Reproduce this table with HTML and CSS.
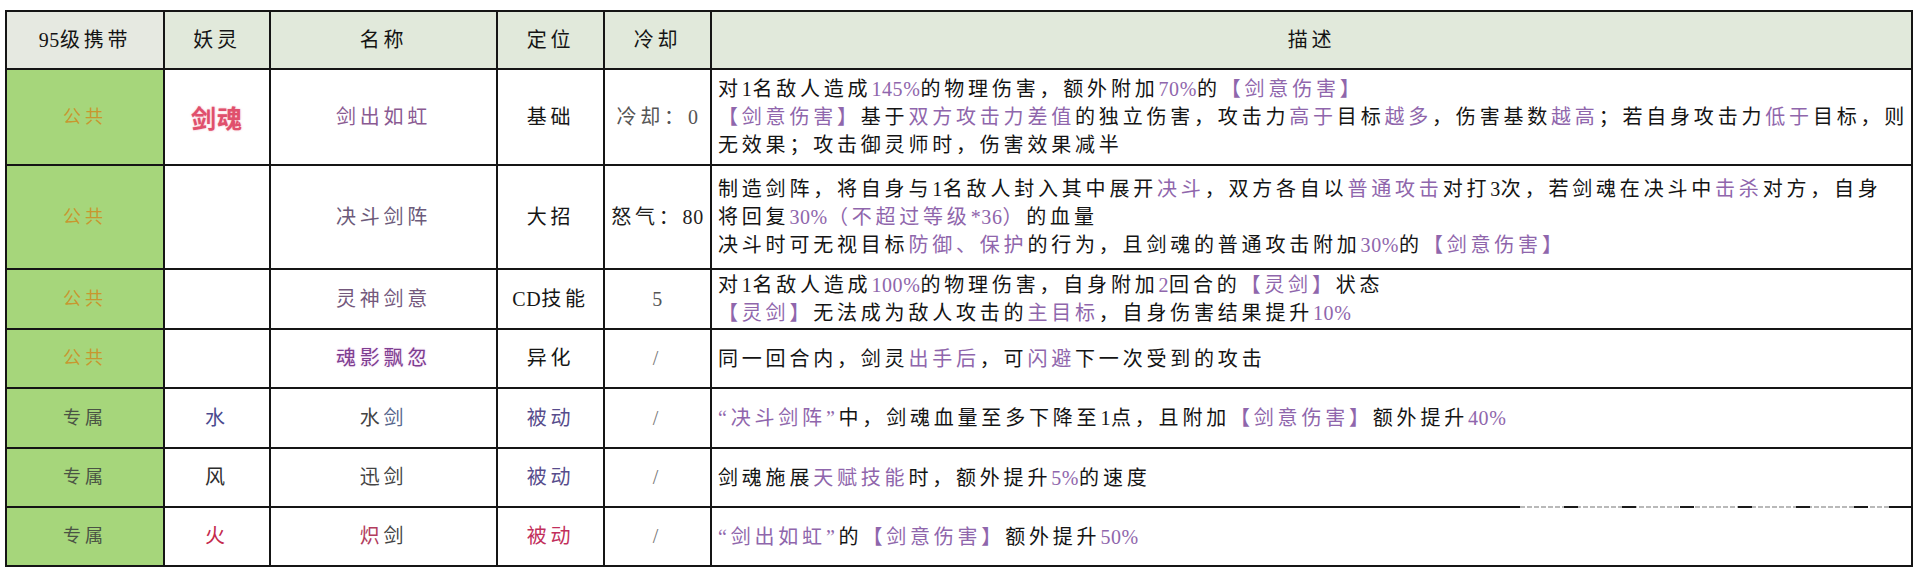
FILE: index.html
```html
<!DOCTYPE html>
<html lang="zh-CN">
<head>
<meta charset="utf-8">
<title>剑魂技能表</title>
<link rel="stylesheet" href="styles.css">
</head>
<body>
<table class="sheet">
  <colgroup>
    <col class="c-lv">
    <col class="c-spirit">
    <col class="c-name">
    <col class="c-role">
    <col class="c-cd">
    <col class="c-desc">
  </colgroup>
  <thead>
    <tr class="r-head">
      <th class="h-lv"><span class="n">95</span>级携带</th>
      <th>妖灵</th>
      <th>名称</th>
      <th>定位</th>
      <th>冷却</th>
      <th>描述</th>
    </tr>
  </thead>
  <tbody>
    <tr class="r1">
      <td class="lv pub">公共</td>
      <td class="spirit main">剑魂</td>
      <td class="name nm-1">剑出如虹</td>
      <td class="role">基础</td>
      <td class="cd cd-grey">冷却：<span class="n">0</span></td>
      <td class="desc">对<span class="n">1</span>名敌人造成<span class="hl n">145%</span>的物理伤害，额外附加<span class="hl n">70%</span>的<span class="hl">【剑意伤害】</span><br><span class="hl">【剑意伤害】</span>基于<span class="hl">双方攻击力差值</span>的独立伤害，攻击力<span class="hl">高于</span>目标<span class="hl">越多</span>，伤害基数<span class="hl">越高</span>；若自身攻击力<span class="hl">低于</span>目标，则<br>无效果；攻击御灵师时，伤害效果减半</td>
    </tr>
    <tr class="r2">
      <td class="lv pub">公共</td>
      <td class="spirit"></td>
      <td class="name nm-2">决斗剑阵</td>
      <td class="role">大招</td>
      <td class="cd">怒气：<span class="n">80</span></td>
      <td class="desc">制造剑阵，将自身与<span class="n">1</span>名敌人封入其中展开<span class="hl">决斗</span>，双方各自以<span class="hl">普通攻击</span>对打<span class="n">3</span>次，若剑魂在决斗中<span class="hl">击杀</span>对方，自身<br>将回复<span class="hl"><span class="n">30%</span>（不超过等级<span class="n">*36</span>）</span>的血量<br>决斗时可无视目标<span class="hl">防御、保护</span>的行为，且剑魂的普通攻击附加<span class="hl n">30%</span>的<span class="hl">【剑意伤害】</span></td>
    </tr>
    <tr class="r3">
      <td class="lv pub">公共</td>
      <td class="spirit"></td>
      <td class="name nm-3">灵神剑意</td>
      <td class="role"><span class="n">CD</span>技能</td>
      <td class="cd cd-grey"><span class="n">5</span></td>
      <td class="desc">对<span class="n">1</span>名敌人造成<span class="hl n">100%</span>的物理伤害，自身附加<span class="hl n">2</span>回合的<span class="hl">【灵剑】</span>状态<br><span class="hl">【灵剑】</span>无法成为敌人攻击的<span class="hl">主目标</span>，自身伤害结果提升<span class="hl n">10%</span></td>
    </tr>
    <tr class="r4">
      <td class="lv pub">公共</td>
      <td class="spirit"></td>
      <td class="name nm-4">魂影飘忽</td>
      <td class="role">异化</td>
      <td class="cd cd-grey"><span class="slash">/</span></td>
      <td class="desc">同一回合内，剑灵<span class="hl">出手后</span>，可<span class="hl">闪避</span>下一次受到的攻击</td>
    </tr>
    <tr class="r5">
      <td class="lv own">专属</td>
      <td class="spirit water">水</td>
      <td class="name"><span class="nm-dark">水</span><span class="nm-blue">剑</span></td>
      <td class="role passive">被动</td>
      <td class="cd cd-grey"><span class="slash">/</span></td>
      <td class="desc"><span class="hl">“决斗剑阵”</span>中，剑魂血量至多下降至<span class="n">1</span>点，且附加<span class="hl">【剑意伤害】</span>额外提升<span class="hl n">40%</span></td>
    </tr>
    <tr class="r6">
      <td class="lv own">专属</td>
      <td class="spirit wind">风</td>
      <td class="name nm-dark">迅剑</td>
      <td class="role passive">被动</td>
      <td class="cd cd-grey"><span class="slash">/</span></td>
      <td class="desc desc-scratch">剑魂施展<span class="hl">天赋技能</span>时，额外提升<span class="hl n">5%</span>的速度</td>
    </tr>
    <tr class="r7">
      <td class="lv own">专属</td>
      <td class="spirit fire">火</td>
      <td class="name"><span class="nm-red">炽</span><span class="nm-dark">剑</span></td>
      <td class="role passive-red">被动</td>
      <td class="cd cd-grey"><span class="slash">/</span></td>
      <td class="desc"><span class="hl">“剑出如虹”</span>的<span class="hl">【剑意伤害】</span>额外提升<span class="hl n">50%</span></td>
    </tr>
  </tbody>
</table>
</body>
</html>
```

FILE: styles.css
```css
html, body {
  margin: 0;
  padding: 0;
  background: #ffffff;
}

body {
  font-family: "Liberation Serif", "Noto Sans CJK SC", serif;
  color: #1e1e1e;
}

.sheet {
  margin: 10px 0 0 5px;
  border-collapse: collapse;
  table-layout: fixed;
  width: 1906px;
}

.c-lv { width: 158px; }
.c-spirit { width: 106px; }
.c-name { width: 227px; }
.c-role { width: 107px; }
.c-cd { width: 107px; }
.c-desc { width: 1201px; }

.sheet th,
.sheet td {
  border: 2px solid #151515;
  padding: 0;
  text-align: center;
  vertical-align: middle;
  font-size: 20px;
  line-height: 27px;
  letter-spacing: 3.8px;
  font-weight: 400;
  white-space: nowrap;
  color: #222;
}

.sheet th {
  background: #e1e9db;
  color: #141414;
}

.sheet th.h-lv {
  background: #e6e9e1;
}

.r-head { height: 58px; }
.r1 { height: 96px; }
.r2 { height: 104px; }
.r3 { height: 60px; }
.r4 { height: 59px; }
.r5 { height: 60px; }
.r6 { height: 59px; }
.r7 { height: 59px; }

.n {
  letter-spacing: 0.6px;
}

/* first column */
.sheet td.lv {
  background: #a6d67b;
  font-size: 18px;
  letter-spacing: 4px;
}

.sheet td.pub { color: #c8972f; }
.sheet td.own { color: #4a5344; }

/* spirit column */
.sheet td.main {
  font-family: "Noto Sans CJK SC", sans-serif;
  font-weight: 700;
  font-size: 25px;
  letter-spacing: 1px;
  color: #e0506c;
  text-shadow: 0 0 2px rgba(232, 96, 124, 0.55);
}

.sheet td.water { color: #4a4a8e; }
.sheet td.wind { color: #2e2e2e; }
.sheet td.fire { color: #c4294c; }

/* name column */
.sheet td.nm-1 { color: #8a5a92; }
.sheet td.nm-2 { color: #6c5a7a; }
.sheet td.nm-3 { color: #74587c; }
.sheet td.nm-4 { color: #7e3e90; text-shadow: 0 0 2px rgba(210, 120, 220, 0.45); }
.nm-dark, .sheet td.nm-dark { color: #444444; }
.nm-blue { color: #56668c; }
.nm-red { color: #b23c5e; }

/* role column */
.sheet td.role { color: #161616; }
.sheet td.passive { color: #574c8c; }
.sheet td.passive-red { color: #c22f5c; }

/* cooldown column */
.sheet td.cd { color: #1e1e1e; }
.sheet td.cd-grey { color: #555555; }
.slash {
  color: #777;
  font-weight: 300;
}

/* description column */
.sheet td.desc {
  text-align: left;
  padding-left: 6px;
  line-height: 28px;
  color: #141414;
}

.hl {
  color: #8f66ac;
}

.desc-scratch {
  position: relative;
}

.desc-scratch::after {
  content: "";
  position: absolute;
  left: 808px;
  width: 369px;
  bottom: -2px;
  height: 2px;
  background:
    repeating-linear-gradient(90deg, transparent 0 44px, #1a1a1a 44px 58px),
    repeating-linear-gradient(90deg, #b9b9b9 0 5px, #ffffff 5px 7px);
}
```
